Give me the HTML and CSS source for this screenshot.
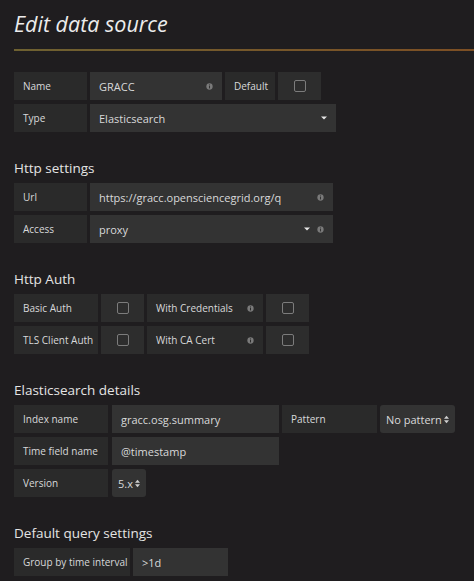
FILE: index.html
```html
<!DOCTYPE html>
<html lang="en">
<head>
    <meta charset="UTF-8">
    <meta name="viewport" content="width=device-width, initial-scale=1.0">
    <title>Edit data source</title>
    <link rel="stylesheet" href="styles.css">
</head>

<body>
    <div class="page">
        <h1 class="page-title">Edit data source</h1>
        <hr class="page-rule" />

        <!-- 基本信息 -->
        <div class="form-row">
            <div class="form-label w73">Name</div>
            <div class="form-input w132">
                <span>GRACC</span>
                <svg class="info" viewBox="0 0 8 8"><circle cx="4" cy="4" r="3.6" /><rect x="3.4" y="3.4" width="1.2" height="2.8" /><rect x="3.4" y="1.7" width="1.2" height="1.1" /></svg>
            </div>
            <div class="form-label w50">Default</div>
            <div class="form-switch"><span class="checkbox"></span></div>
        </div>
        <div class="form-row">
            <div class="form-label w73">Type</div>
            <div class="form-input w246">
                <span>Elasticsearch</span>
                <svg class="caret" viewBox="0 0 6 4"><path d="M0 0.5h6L3 3.5z" /></svg>
            </div>
        </div>

        <h3 class="section-title">Http settings</h3>
        <div class="form-row">
            <div class="form-label w73">Url</div>
            <div class="form-input w243">
                <span>https://gracc.opensciencegrid.org/q</span>
                <svg class="info" viewBox="0 0 8 8"><circle cx="4" cy="4" r="3.6" /><rect x="3.4" y="3.4" width="1.2" height="2.8" /><rect x="3.4" y="1.7" width="1.2" height="1.1" /></svg>
            </div>
        </div>
        <div class="form-row">
            <div class="form-label w73">Access</div>
            <div class="form-input w243">
                <span>proxy</span>
                <span class="icons">
                    <svg class="caret" viewBox="0 0 6 4"><path d="M0 0.5h6L3 3.5z" /></svg>
                    <svg class="info" viewBox="0 0 8 8"><circle cx="4" cy="4" r="3.6" /><rect x="3.4" y="3.4" width="1.2" height="2.8" /><rect x="3.4" y="1.7" width="1.2" height="1.1" /></svg>
                </span>
            </div>
        </div>

        <h3 class="section-title">Http Auth</h3>
        <div class="form-row">
            <div class="form-label w84">Basic Auth</div>
            <div class="form-switch"><span class="checkbox"></span></div>
            <div class="form-label w116 spread">
                <span>With Credentials</span>
                <svg class="info" viewBox="0 0 8 8"><circle cx="4" cy="4" r="3.6" /><rect x="3.4" y="3.4" width="1.2" height="2.8" /><rect x="3.4" y="1.7" width="1.2" height="1.1" /></svg>
            </div>
            <div class="form-switch"><span class="checkbox"></span></div>
        </div>
        <div class="form-row">
            <div class="form-label w84">TLS Client Auth</div>
            <div class="form-switch"><span class="checkbox"></span></div>
            <div class="form-label w116 spread">
                <span>With CA Cert</span>
                <svg class="info" viewBox="0 0 8 8"><circle cx="4" cy="4" r="3.6" /><rect x="3.4" y="3.4" width="1.2" height="2.8" /><rect x="3.4" y="1.7" width="1.2" height="1.1" /></svg>
            </div>
            <div class="form-switch"><span class="checkbox"></span></div>
        </div>

        <h3 class="section-title">Elasticsearch details</h3>
        <div class="form-row">
            <div class="form-label w94">Index name</div>
            <div class="form-input w167 wide-gap">gracc.osg.summary</div>
            <div class="form-label w95">Pattern</div>
            <div class="form-select w75">
                <span>No pattern</span>
                <svg class="updown" viewBox="0 0 6 10"><path d="M0 4h6L3 0.5z" /><path d="M0 6h6L3 9.5z" /></svg>
            </div>
        </div>
        <div class="form-row">
            <div class="form-label w94">Time field name</div>
            <div class="form-input w167 wide-gap">@timestamp</div>
        </div>
        <div class="form-row">
            <div class="form-label w94">Version</div>
            <div class="form-select w34 wide-gap">
                <span>5.x</span>
                <svg class="updown" viewBox="0 0 6 10"><path d="M0 4h6L3 0.5z" /><path d="M0 6h6L3 9.5z" /></svg>
            </div>
        </div>

        <h3 class="section-title">Default query settings</h3>
        <div class="form-row">
            <div class="form-label w116">Group by time interval</div>
            <div class="form-input w95">&gt;1d</div>
        </div>
    </div>
</body>
</html>
```

FILE: styles.css
```css
body {
    margin: 0;
    background-color: #1f1d1f;
    color: #d8d9da;
    font-family: "Open Sans", "Noto Sans", sans-serif;
}

.page {
    padding: 11px 0 0 14px;
}

.page-title {
    margin: 0;
    font-size: 21.5px;
    line-height: 25px;
    font-style: italic;
    font-weight: 400;
    color: #ececec;
}

.page-rule {
    border: none;
    height: 2px;
    margin: 13px 0 21px;
    background: linear-gradient(90deg, #6e6131, #7d4f24);
}

.section-title {
    margin: 27px 0 6px;
    font-size: 13.5px;
    line-height: 18px;
    font-weight: 400;
    color: #e4e4e4;
}

.form-row {
    display: flex;
    gap: 3px;
    height: 28px;
    margin-bottom: 4px;
}

.form-label,
.form-input,
.form-select {
    display: flex;
    align-items: center;
    box-sizing: border-box;
    padding: 0 9px;
    white-space: nowrap;
}

.form-label {
    background-color: #2a2a2a;
    font-size: 10px;
}

.form-input {
    background-color: #333;
    font-size: 11px;
    justify-content: space-between;
}

.form-select {
    background-color: #333;
    font-size: 11px;
    border-radius: 3px;
    padding: 0 6px;
    justify-content: space-between;
}

.spread {
    justify-content: space-between;
}

.wide-gap {
    margin-left: 1px;
}

.form-switch {
    width: 43px;
    background-color: #2d2d2d;
    display: flex;
    align-items: center;
    justify-content: center;
}

.checkbox {
    width: 12px;
    height: 12px;
    border: 1px solid #7c7c7c;
    border-radius: 2px;
    box-sizing: border-box;
}

.icons {
    display: flex;
    align-items: center;
    gap: 7px;
}

.info {
    width: 7px;
    height: 7px;
    fill: #7a7a7a;
}

.info rect {
    fill: #333;
}

.form-label .info rect {
    fill: #2a2a2a;
}

.caret {
    width: 6px;
    height: 4px;
    fill: #e6e6e6;
}

.updown {
    width: 5px;
    height: 9px;
    fill: #d0d0d0;
}

.w34 { width: 34px; }
.w50 { width: 50px; }
.w73 { width: 73px; }
.w75 { width: 75px; }
.w84 { width: 84px; }
.w94 { width: 94px; }
.w95 { width: 95px; }
.w116 { width: 116px; }
.w132 { width: 132px; }
.w167 { width: 167px; }
.w243 { width: 243px; }
.w246 { width: 246px; }
```
